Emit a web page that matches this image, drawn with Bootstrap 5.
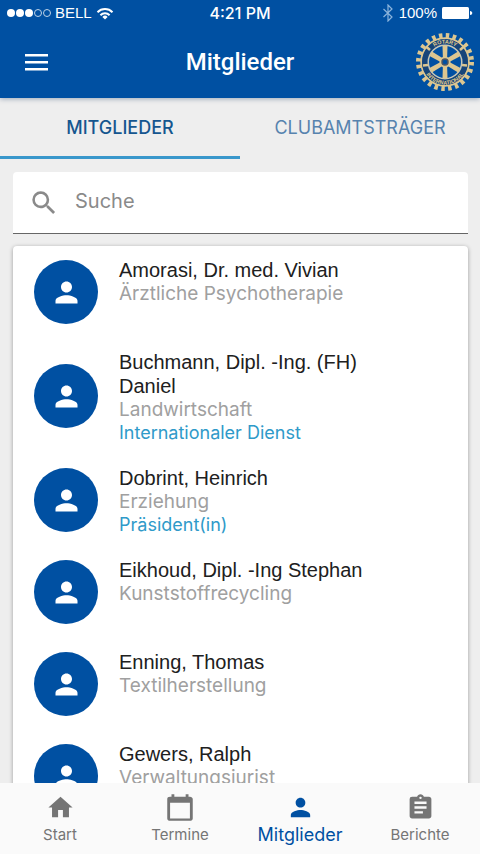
<!DOCTYPE html>
<html lang="de">
<head>
<meta charset="utf-8">
<meta name="viewport" content="width=device-width, initial-scale=1">
<title>Mitglieder</title>
<link rel="stylesheet" href="https://cdn.jsdelivr.net/npm/bootstrap@5.3.0/dist/css/bootstrap.min.css">
<style>
:root { --brand: #0050a2; --accent: #2f9ac9; --page: #eeeeee; --ink-muted: #757575; }
body { background: var(--page); font-family: Inter, "Liberation Sans", sans-serif; }
svg { display: block; fill: currentColor; }
.app-header { background: var(--brand); box-shadow: 0 1px 5px rgba(0, 40, 90, .35); z-index: 2; }
.status-bar { height: 26px; font: 15px/26px "Liberation Sans", sans-serif; padding: 0 7px; }
.status-bar .clock { font-family: Inter, sans-serif; font-size: 16px; font-weight: 500; }
.app-bar { height: 72px; padding: 0 6px; }
.app-bar h1 { font: 500 24px/32px Roboto, sans-serif; }
.bar-side { flex: 1 1 0; }
.menu-toggle { width: 32px; height: 32px; margin-left: 14px; }
.view-tabs .nav-link { height: 61px; border-radius: 0; border-bottom: 3px solid transparent; color: #5783ae; font-size: 18px; line-height: 24px; padding: 2px 0 0; }
.view-tabs .nav-link.active { color: #15568f; border-color: #3997cb; font-weight: 500; }
.content-column { margin: 0 12px 0 13px; }
.search-box { background: #fff; height: 62px; margin-top: 13px; padding: 0 18px; gap: 18px; border-bottom: 1px solid #666; border-radius: 4px 4px 0 0; color: #8a8a8a; }
.search-box .form-control { font-size: 20px; line-height: 28px; color: #555; }
.search-box .form-control::placeholder { color: #8a8a8a; }
.member-list { background: #fff; margin-top: 12px; box-shadow: 0 1px 4px rgba(0, 0, 0, .35); border-radius: 4px 4px 0 0; }
.member-row { min-height: 92px; padding: 0 64px 0 21px; gap: 21px; }
.avatar { width: 64px; height: 64px; background: var(--brand); }
.member-text { padding: 12px 0 11px; }
.member-name { font: 20px/24px "Liberation Sans", Arial, sans-serif; color: #202020; }
.member-job { font-size: 19px; line-height: 24px; color: #a0a0a0; }
.member-role { font-size: 18px; line-height: 21px; color: var(--accent); }
.bottom-bar { background: #fafafa; height: 71px; z-index: 2; }
.bottom-bar .nav-link { height: 71px; padding: 10px 0 0; gap: 3px; color: var(--ink-muted); font-size: 15px; line-height: 20px; }
.bottom-bar .nav-link.active { color: var(--brand); font-size: 18px; }
.rim-text { font: bold 11px "Liberation Sans", sans-serif; fill: #e2cc8e; }
</style>
</head>
<body>
<div class="d-flex flex-column vh-100 overflow-hidden">
  <header class="app-header text-white position-relative flex-shrink-0">
    <div class="status-bar d-flex align-items-center">
      <div class="bar-side d-flex align-items-center gap-1">
        <svg width="44" height="10" viewBox="0 0 44 10" aria-hidden="true"><circle cx="4" cy="5" r="4"/><circle cx="13" cy="5" r="4"/><circle cx="22" cy="5" r="4"/><g fill="none" stroke="currentColor" opacity=".75"><circle cx="31" cy="5" r="3.5"/><circle cx="40" cy="5" r="3.5"/></g></svg>
        <span>BELL</span>
        <svg width="18" height="13" viewBox="0 0 18 13" aria-hidden="true"><g fill="none" stroke="currentColor" stroke-width="2"><path d="M1.5 5.2a10.5 10.5 0 0 1 15 0M4.4 8.2a6.5 6.5 0 0 1 9.2 0"/></g><path d="M9 12.5 6.4 9.9a3.7 3.7 0 0 1 5.2 0z"/></svg>
      </div>
      <span class="clock">4:21 PM</span>
      <div class="bar-side d-flex align-items-center justify-content-end gap-1">
        <svg width="14" height="18" viewBox="0 0 14 18" aria-hidden="true"><path d="m2.5 5 8.500 8-4 4V1l4 4-8.500 8" fill="none" stroke="#8bb4dc" stroke-width="1.2"/></svg>
        <span>100%</span>
        <svg width="32" height="12" viewBox="0 0 32 12" aria-hidden="true"><rect x="1" width="27" height="12" rx="1.5"/><path d="M29 4c3 0 3 4 0 4z"/></svg>
      </div>
    </div>
    <div class="app-bar d-flex align-items-center">
      <div class="bar-side">
        <button class="menu-toggle btn p-0 border-0 text-white d-flex align-items-center justify-content-center" type="button" aria-label="Menü">
          <svg width="23" height="17" viewBox="0 0 23 17"><path d="M0 0h23v2.500H0zM0 7h23v2.500H0zM0 14h23v2.500H0z"/></svg>
        </button>
      </div>
      <h1 class="m-0">Mitglieder</h1>
      <div class="bar-side d-flex justify-content-end">
        <svg width="58" height="58" viewBox="0 0 116 116" role="img" aria-label="Rotary International">
          <defs><path id="rimTop" d="M21 58a37 37 0 0 1 74 0"/><path id="rimBottom" d="M13 58a45 45 0 0 0 90 0"/></defs>
          <circle cx="58" cy="58" r="53" fill="none" stroke="#dcc690" stroke-width="10" stroke-dasharray="7 6.875"/>
          <circle cx="58" cy="58" r="47.500" fill="none" stroke="#dcc690" stroke-width="4"/>
          <circle cx="58" cy="58" r="40.500" fill="none" stroke="#174579" stroke-width="11"/>
          <circle cx="58" cy="58" r="33.500" fill="none" stroke="#c9c7b5" stroke-width="3"/>
          <g stroke="#dcc690" stroke-width="5"><path d="M28 34l-8-7M88 34l8-7M14 65l10-1M92 64l10 1"/></g>
          <g fill="#dcc690"><path id="spoke" d="M54 58 53 25h10l-1 33z"/><use href="#spoke" transform="rotate(60 58 58)"/><use href="#spoke" transform="rotate(120 58 58)"/><use href="#spoke" transform="rotate(180 58 58)"/><use href="#spoke" transform="rotate(240 58 58)"/><use href="#spoke" transform="rotate(300 58 58)"/><circle cx="58" cy="58" r="11"/></g>
          <circle cx="58" cy="58" r="6" fill="#0050a2" stroke="#4b5665" stroke-width="3"/>
          <text class="rim-text" text-anchor="middle"><textPath href="#rimTop" startOffset="50%">ROTARY</textPath></text>
          <text class="rim-text" text-anchor="middle"><textPath href="#rimBottom" startOffset="50%">INTERNATIONAL</textPath></text>
        </svg>
      </div>
    </div>
  </header>

  <main class="flex-grow-1 overflow-hidden d-flex flex-column">
    <nav class="view-tabs nav nav-justified flex-shrink-0" aria-label="Ansicht">
      <a class="nav-link active d-flex align-items-center justify-content-center" aria-current="page" href="#mitglieder">MITGLIEDER</a>
      <a class="nav-link d-flex align-items-center justify-content-center" href="#amtstraeger">CLUBAMTSTRÄGER</a>
    </nav>
    <div class="content-column">
      <div class="search-box d-flex align-items-center">
        <label for="suche" aria-label="Suche"><svg width="26" height="26" viewBox="2 2 20 20"><path d="M15.500 14h-.79l-.28-.27A6.471 6.471 0 0 0 16 9.500 6.500 6.500 0 1 0 9.500 16c1.610 0 3.090-.59 4.230-1.570l.27.28v.79l5 4.990L20.490 19l-4.990-5zm-6 0C7.010 14 5 11.990 5 9.500S7.010 5 9.500 5 14 7.010 14 9.500 11.990 14 9.500 14z"/></svg></label>
        <input class="form-control bg-transparent border-0 shadow-none p-0 mb-1" id="suche" type="search" placeholder="Suche">
      </div>
      <div class="member-list" id="members">
        <a class="member-row d-flex align-items-center text-decoration-none" href="#amorasi"><span class="avatar rounded-circle flex-shrink-0 d-flex align-items-center justify-content-center text-white"><svg width="33" height="33" viewBox="0 0 24 24"><use href="#person"/></svg></span><span class="member-text d-block align-self-start"><span class="member-name d-block">Amorasi, Dr. med. Vivian</span><span class="member-job d-block">Ärztliche Psychotherapie</span></span></a>
        <a class="member-row d-flex align-items-center text-decoration-none" href="#buchmann"><span class="avatar rounded-circle flex-shrink-0 d-flex align-items-center justify-content-center text-white"><svg width="33" height="33" viewBox="0 0 24 24"><use href="#person"/></svg></span><span class="member-text d-block align-self-start"><span class="member-name d-block">Buchmann, Dipl. -Ing. (FH) Daniel</span><span class="member-job d-block">Landwirtschaft</span><span class="member-role d-block">Internationaler Dienst</span></span></a>
        <a class="member-row d-flex align-items-center text-decoration-none" href="#dobrint"><span class="avatar rounded-circle flex-shrink-0 d-flex align-items-center justify-content-center text-white"><svg width="33" height="33" viewBox="0 0 24 24"><use href="#person"/></svg></span><span class="member-text d-block align-self-start"><span class="member-name d-block">Dobrint, Heinrich</span><span class="member-job d-block">Erziehung</span><span class="member-role d-block">Präsident(in)</span></span></a>
        <a class="member-row d-flex align-items-center text-decoration-none" href="#eikhoud"><span class="avatar rounded-circle flex-shrink-0 d-flex align-items-center justify-content-center text-white"><svg width="33" height="33" viewBox="0 0 24 24"><use href="#person"/></svg></span><span class="member-text d-block align-self-start"><span class="member-name d-block">Eikhoud, Dipl. -Ing Stephan</span><span class="member-job d-block">Kunststoffrecycling</span></span></a>
        <a class="member-row d-flex align-items-center text-decoration-none" href="#enning"><span class="avatar rounded-circle flex-shrink-0 d-flex align-items-center justify-content-center text-white"><svg width="33" height="33" viewBox="0 0 24 24"><use href="#person"/></svg></span><span class="member-text d-block align-self-start"><span class="member-name d-block">Enning, Thomas</span><span class="member-job d-block">Textilherstellung</span></span></a>
        <a class="member-row d-flex align-items-center text-decoration-none" href="#gewers"><span class="avatar rounded-circle flex-shrink-0 d-flex align-items-center justify-content-center text-white"><svg width="33" height="33" viewBox="0 0 24 24"><use href="#person"/></svg></span><span class="member-text d-block align-self-start"><span class="member-name d-block">Gewers, Ralph</span><span class="member-job d-block">Verwaltungsjurist</span></span></a>
      </div>
    </div>
  </main>

  <nav class="bottom-bar nav nav-justified position-relative flex-shrink-0" aria-label="Hauptnavigation">
    <a class="nav-link d-flex flex-column align-items-center" href="#start"><svg width="29" height="29" viewBox="0 0 24 24"><path d="M10 20v-6h4v6h5v-8h3L12 3 2 12h3v8z"/></svg>Start</a>
    <a class="nav-link d-flex flex-column align-items-center" href="#termine"><svg width="34" height="29" viewBox="0 0 24 24" preserveAspectRatio="none"><path d="M19 3h-1V1h-2v2H8V1H6v2H5a2 2 0 0 0-2 2v16c0 1.100.9 2 2 2h14c1.100 0 2-.9 2-2V5c0-1.100-.9-2-2-2zm0 18H5V8h14z"/></svg>Termine</a>
    <a class="nav-link active d-flex flex-column align-items-center" aria-current="page" href="#mitglieder"><svg width="31" height="29" viewBox="0 0 24 24"><path id="person" d="M12 12c2.210 0 4-1.790 4-4s-1.790-4-4-4-4 1.790-4 4 1.790 4 4 4zm0 2c-2.670 0-8 1.340-8 4v2h16v-2c0-2.660-5.330-4-8-4z"/></svg>Mitglieder</a>
    <a class="nav-link d-flex flex-column align-items-center" href="#berichte"><svg width="31" height="29" viewBox="0 0 24 24"><path d="M19 3h-4.180C14.400 1.840 13.300 1 12 1s-2.400.84-2.820 2H5a2 2 0 0 0-2 2v14c0 1.100.9 2 2 2h14c1.100 0 2-.9 2-2V5c0-1.100-.9-2-2-2zm-7 0a1 1 0 1 1 0 2 1 1 0 0 1 0-2zm2 14H7v-2h7zm3-4H7v-2h10zm0-4H7V7h10z"/></svg>Berichte</a>
  </nav>
</div>
<script src="https://cdn.jsdelivr.net/npm/bootstrap@5.3.0/dist/js/bootstrap.bundle.min.js"></script>
</body>
</html>
